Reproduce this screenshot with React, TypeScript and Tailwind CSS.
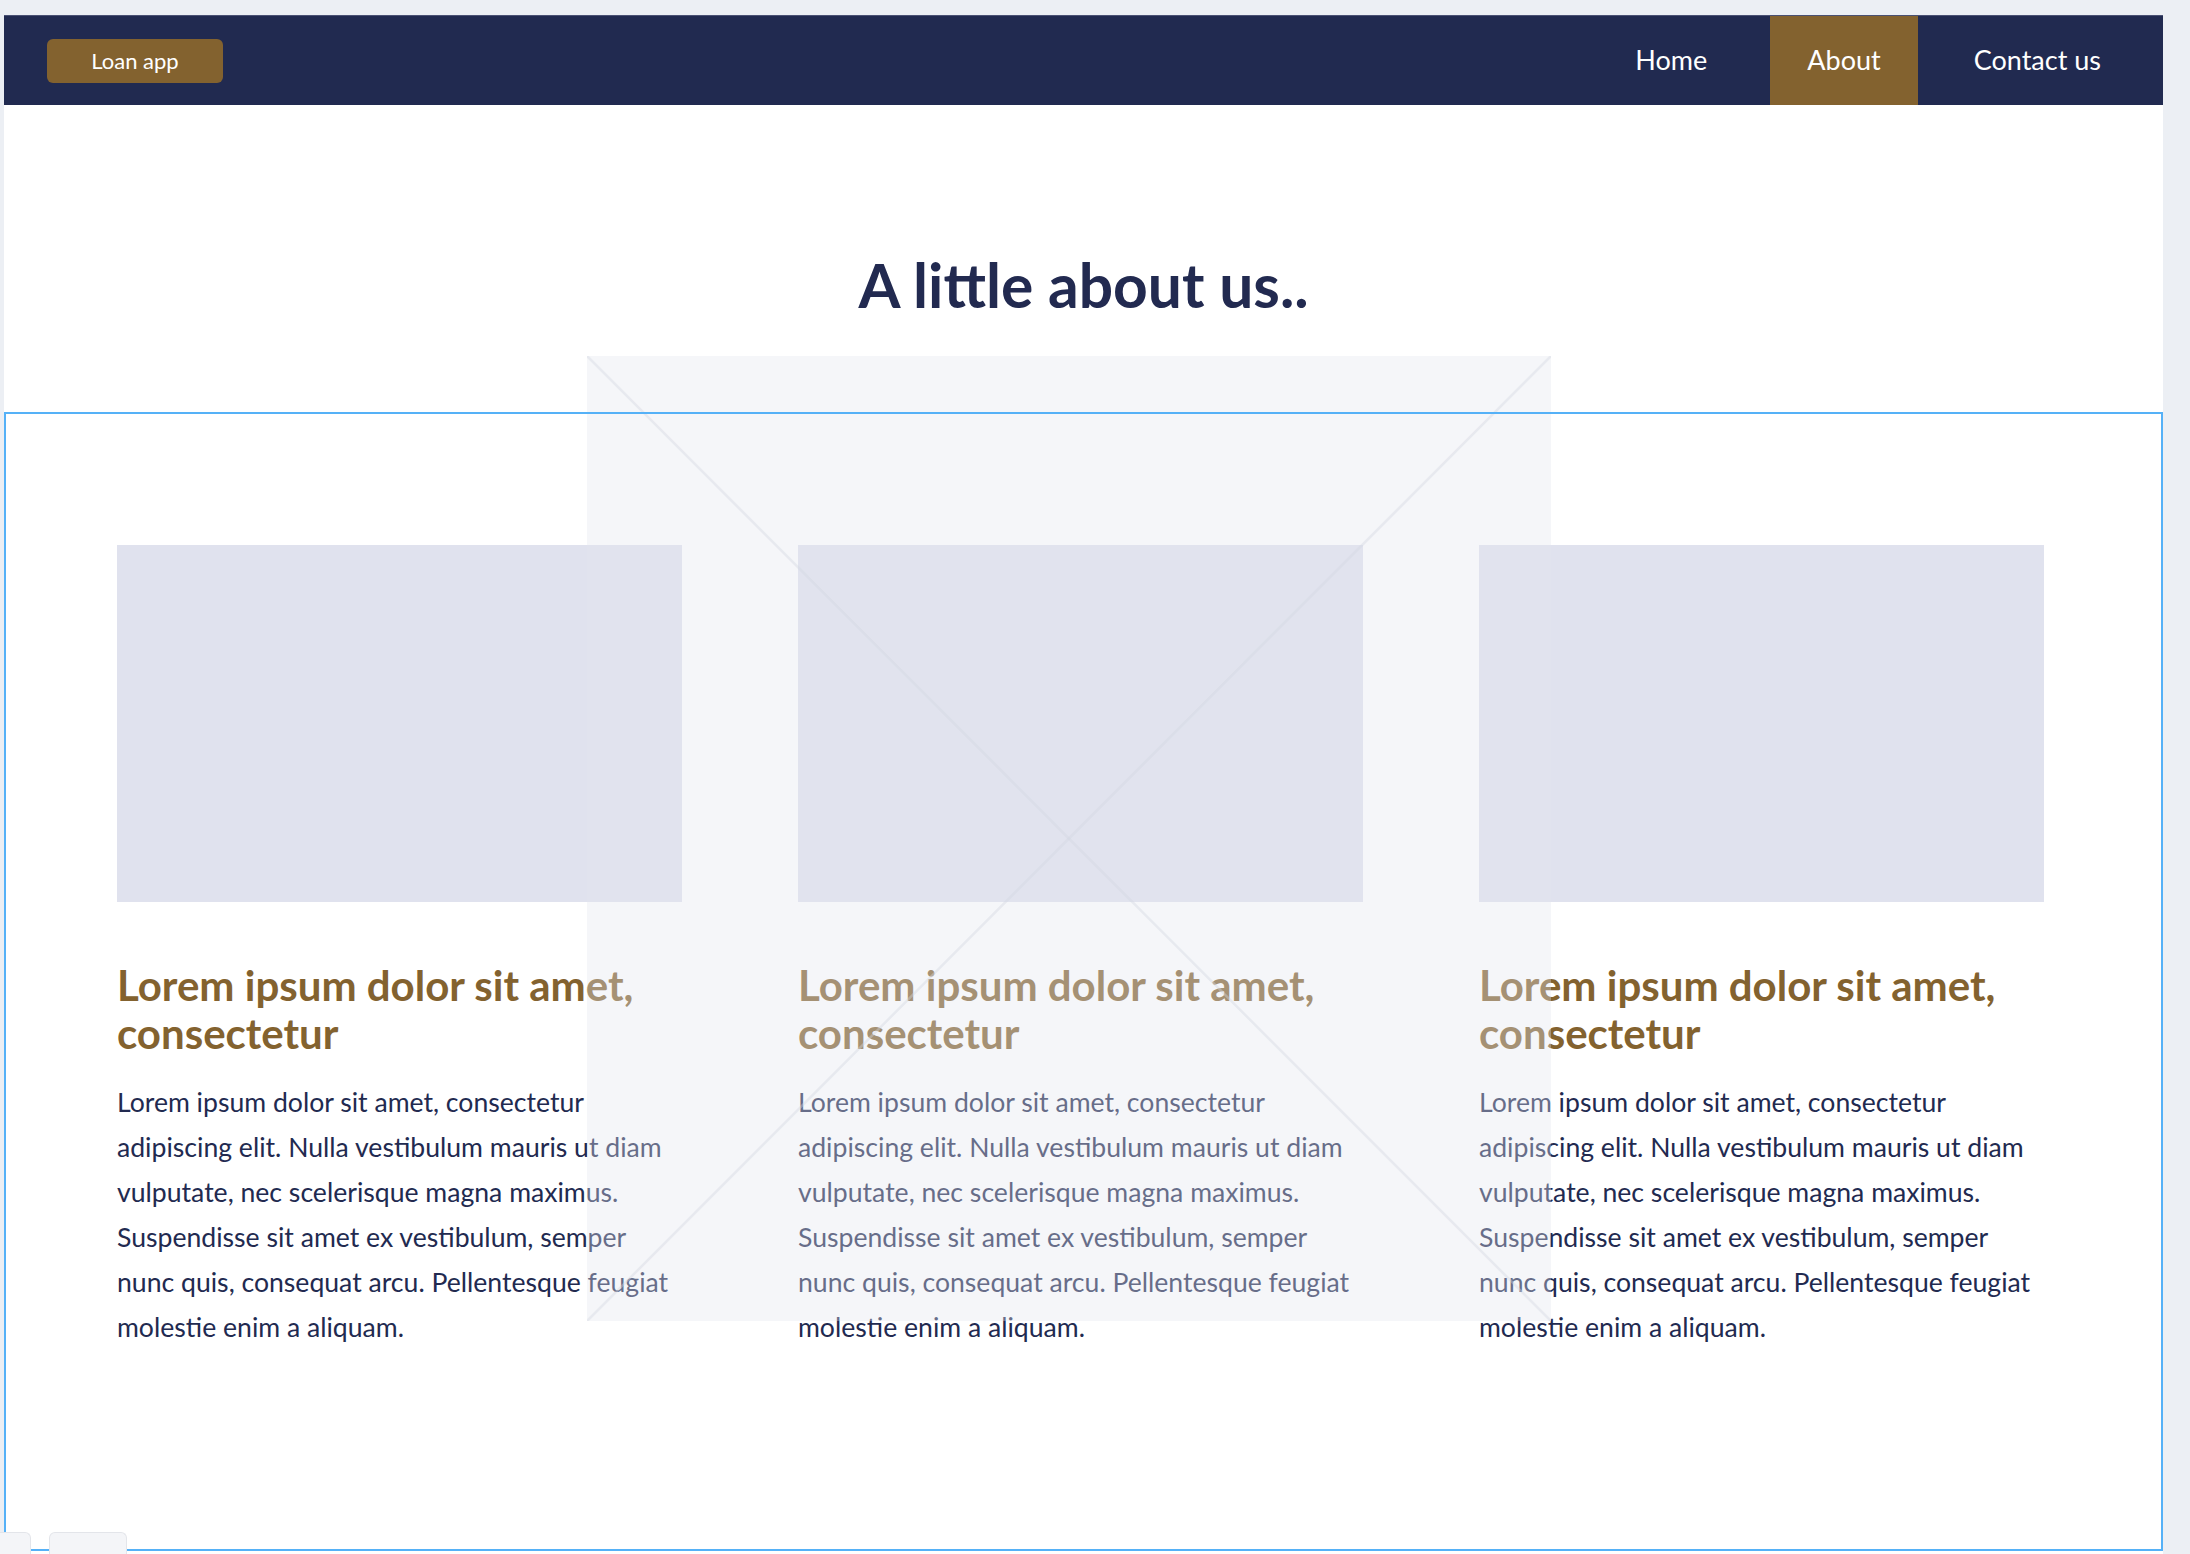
import React from "react";

const body =
  "Lorem ipsum dolor sit amet, consectetur adipiscing elit. Nulla vestibulum mauris ut diam vulputate, nec scelerisque magna maximus. Suspendisse sit amet ex vestibulum, semper nunc quis, consequat arcu. Pellentesque feugiat molestie enim a aliquam.";

function Card() {
  return (
    <div className="w-[565px] shrink-0">
      <div className="w-[565px] h-[357px] bg-[#e0e2ee]" />
      <h3 className="mt-[59px] text-[42px] leading-[48px] font-bold text-[#83622f]">
        Lorem ipsum dolor sit amet, consectetur
      </h3>
      <p className="mt-[23px] text-[26.6px] leading-[45px] text-[#222a50]">{body}</p>
    </div>
  );
}

export default function App() {
  return (
    <div className="relative w-[2190px] h-[1554px] overflow-hidden bg-[#eceff4] pt-[15px] pl-[4px] font-['Lato',sans-serif]">
      <div className="relative w-[2159px] h-[1539px] bg-white">
        <nav className="h-[90px] bg-[#212a50] border-t border-[#4a5173] flex items-stretch justify-between">
          <div className="flex items-center pl-[43px]">
            <div className="w-[176px] h-[44px] rounded-[6px] bg-[#83622f] text-white text-[22px] flex items-center justify-center">
              Loan app
            </div>
          </div>
          <div className="flex items-stretch pr-[25px] text-[27px] text-white">
            <a className="flex items-center px-[37px] mr-[26px]">Home</a>
            <a className="flex items-center px-[37px] bg-[#83622f]">About</a>
            <a className="flex items-center px-[37px] ml-[19px]">Contact us</a>
          </div>
        </nav>

        <div className="pt-[150px] pb-[96px] flex justify-center">
          <h1 className="text-[60.5px] leading-none font-bold text-[#222a50]">A little about us..</h1>
        </div>

        <section className="relative h-[1139px]">
          <div className="flex gap-[116px] pt-[133px] pl-[113px]">
            <Card />
            <Card />
            <Card />
          </div>
          <div className="pointer-events-none absolute inset-0 border-2 border-[#55b1f7] z-20" />
        </section>

        <div className="pointer-events-none absolute left-[583px] top-[341px] w-[964px] h-[965px] bg-[rgba(228,231,237,0.36)] z-10">
          <svg className="w-full h-full" viewBox="0 0 964 965" preserveAspectRatio="none">
            <line x1="0" y1="0" x2="964" y2="965" stroke="rgba(210,214,225,0.4)" strokeWidth="2.5" />
            <line x1="964" y1="0" x2="0" y2="965" stroke="rgba(210,214,225,0.4)" strokeWidth="2.5" />
          </svg>
        </div>
      </div>

      <div className="absolute left-0 bottom-0 w-[31px] h-[22px] rounded-tr-[6px] border border-l-0 border-b-0 border-[#e3e5ea] bg-[#f4f5f8] z-30" />
      <div className="absolute left-[49px] bottom-0 w-[78px] h-[22px] rounded-t-[6px] border border-b-0 border-[#e3e5ea] bg-[#f4f5f8] z-30" />
    </div>
  );
}
